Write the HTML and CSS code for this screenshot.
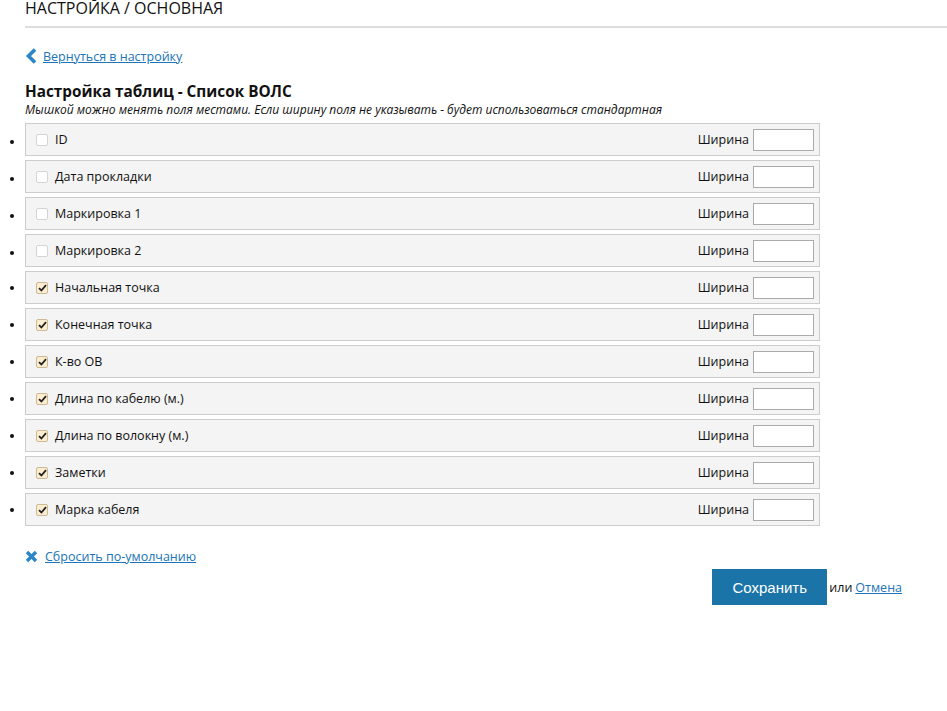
FILE: index.html
```html
<!DOCTYPE html>
<html lang="ru">
<head>
<meta charset="utf-8">
<link rel="stylesheet" href="styles.css">
</head>
<body>
<div class="page">
  <h1 class="title">НАСТРОЙКА / ОСНОВНАЯ</h1>
  <div class="back">
    <svg class="chev" width="13" height="16" viewBox="0 0 13 16"><path d="M10 1.5 L3.5 8 L10 14.5" fill="none" stroke="#2b86c9" stroke-width="3.6" stroke-linejoin="miter"/></svg>
    <a href="#">Вернуться в настройку</a>
  </div>
  <h2 class="heading">Настройка таблиц - Список ВОЛС</h2>
  <p class="hint">Мышкой можно менять поля местами. Если ширину поля не указывать - будет использоваться стандартная</p>
  <ul class="fields">
    <li class="item"><div class="row"><span class="cb"></span><span class="label">ID</span><span class="w">Ширина</span><span class="inp"></span></div></li>
    <li class="item"><div class="row"><span class="cb"></span><span class="label">Дата прокладки</span><span class="w">Ширина</span><span class="inp"></span></div></li>
    <li class="item"><div class="row"><span class="cb"></span><span class="label">Маркировка 1</span><span class="w">Ширина</span><span class="inp"></span></div></li>
    <li class="item"><div class="row"><span class="cb"></span><span class="label">Маркировка 2</span><span class="w">Ширина</span><span class="inp"></span></div></li>
    <li class="item"><div class="row"><span class="cb on"><svg width="9" height="8" viewBox="0 0 9 8"><path d="M1 4.2 L3.4 6.5 L8 1.2" fill="none" stroke="#222" stroke-width="1.8"/></svg></span><span class="label">Начальная точка</span><span class="w">Ширина</span><span class="inp"></span></div></li>
    <li class="item"><div class="row"><span class="cb on"><svg width="9" height="8" viewBox="0 0 9 8"><path d="M1 4.2 L3.4 6.5 L8 1.2" fill="none" stroke="#222" stroke-width="1.8"/></svg></span><span class="label">Конечная точка</span><span class="w">Ширина</span><span class="inp"></span></div></li>
    <li class="item"><div class="row"><span class="cb on"><svg width="9" height="8" viewBox="0 0 9 8"><path d="M1 4.2 L3.4 6.5 L8 1.2" fill="none" stroke="#222" stroke-width="1.8"/></svg></span><span class="label">К-во ОВ</span><span class="w">Ширина</span><span class="inp"></span></div></li>
    <li class="item"><div class="row"><span class="cb on"><svg width="9" height="8" viewBox="0 0 9 8"><path d="M1 4.2 L3.4 6.5 L8 1.2" fill="none" stroke="#222" stroke-width="1.8"/></svg></span><span class="label">Длина по кабелю (м.)</span><span class="w">Ширина</span><span class="inp"></span></div></li>
    <li class="item"><div class="row"><span class="cb on"><svg width="9" height="8" viewBox="0 0 9 8"><path d="M1 4.2 L3.4 6.5 L8 1.2" fill="none" stroke="#222" stroke-width="1.8"/></svg></span><span class="label">Длина по волокну (м.)</span><span class="w">Ширина</span><span class="inp"></span></div></li>
    <li class="item"><div class="row"><span class="cb on"><svg width="9" height="8" viewBox="0 0 9 8"><path d="M1 4.2 L3.4 6.5 L8 1.2" fill="none" stroke="#222" stroke-width="1.8"/></svg></span><span class="label">Заметки</span><span class="w">Ширина</span><span class="inp"></span></div></li>
    <li class="item"><div class="row"><span class="cb on"><svg width="9" height="8" viewBox="0 0 9 8"><path d="M1 4.2 L3.4 6.5 L8 1.2" fill="none" stroke="#222" stroke-width="1.8"/></svg></span><span class="label">Марка кабеля</span><span class="w">Ширина</span><span class="inp"></span></div></li>
  </ul>
  <div class="reset">
    <svg class="x" width="13" height="13" viewBox="0 0 13 13"><path d="M2 2 L11 11 M11 2 L2 11" stroke="#2b86c9" stroke-width="3.4"/></svg>
    <a href="#">Сбросить по-умолчанию</a>
  </div>
  <div class="actions">
    <button class="save">Сохранить</button>
    <span class="or">или</span>
    <a href="#">Отмена</a>
  </div>
</div>
</body>
</html>
```
FILE: styles.css
```css
html, body { margin: 0; padding: 0; background: #fff; }
body { font-family: "Open Sans", "Noto Sans", sans-serif; color: #111; font-size: 12.5px; }
.page { padding-left: 25px; width: 922px; }
.title { margin: 0 0 18px; font-size: 16px; font-weight: 400; line-height: 16px; color: #111; border-bottom: 2px solid #ddd; padding-bottom: 10px; }
.back { display: flex; align-items: center; height: 20px; }
.chev { margin-right: 5px; }
a { color: #2074b8; text-decoration: underline; }
.back a { font-size: 12.5px; }
.heading { margin: 15px 0 0; font-size: 15.3px; font-weight: 700; line-height: 20px; }
.hint { margin: 1px 0 0; font-size: 12px; font-style: italic; line-height: 15px; }
.fields { margin: 6px 0 0; padding: 0; width: 795px; list-style: disc outside; }
.item { margin-bottom: 4px; font-size: 12.5px; }
.item::marker { font-size: 12px; }
.row { box-sizing: border-box; height: 33px; border: 1px solid #ccc; background: #f4f4f4; display: flex; align-items: center; padding: 0 5px 0 10px; }
.cb { box-sizing: border-box; width: 12px; height: 12px; border: 1px solid #d4d4d4; border-radius: 2px; background: #fff; margin-right: 7px; display: inline-flex; align-items: center; justify-content: center; }
.cb.on { background: #fbedcf; border-color: #cdb994; }
.label { flex: 1; }
.w { margin-right: 4px; }
.inp { box-sizing: border-box; width: 61px; height: 22px; border: 1px solid #aaa; background: #fff; }
.reset { display: flex; align-items: center; margin-top: 21px; height: 18px; }
.reset .x { margin-right: 7px; }
.reset a { font-size: 12.5px; }
.actions { display: flex; align-items: center; justify-content: flex-end; width: 877px; margin-top: 4px; }
.save { background: #1a74a8; color: #fff; border: 0; width: 115px; height: 36px; font-family: "Liberation Sans", Arial, sans-serif; font-size: 15px; padding: 0; margin-right: 2px; }
.or { margin-right: 3px; }
.actions a { font-size: 12.5px; }
```
